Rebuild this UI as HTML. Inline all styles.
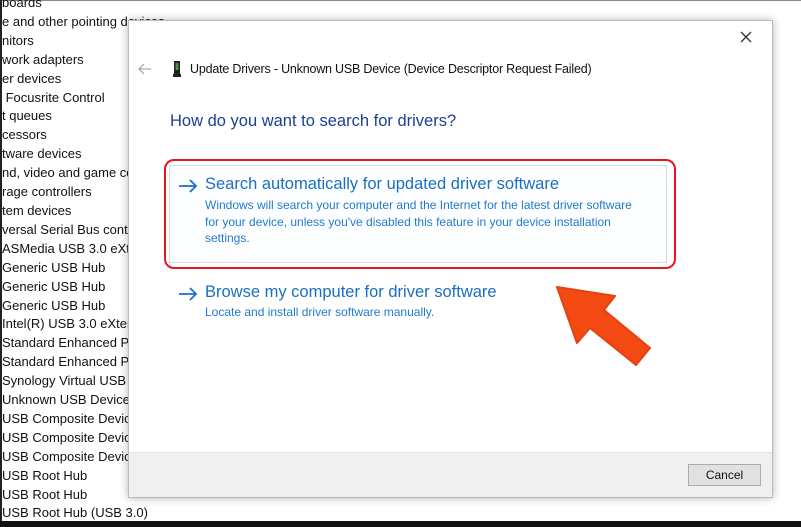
<!DOCTYPE html>
<html><head><meta charset="utf-8"><style>
*{margin:0;padding:0;box-sizing:border-box}
body{width:801px;height:527px;overflow:hidden;background:#fff;position:relative;font-family:"Liberation Sans",sans-serif}
.list{position:absolute;left:2px;top:-6px;font-size:13px;color:#111;line-height:18.9px;white-space:nowrap}
.lb{position:absolute;left:0;top:0;width:2px;height:527px;background:#222}
.bb{position:absolute;left:0;top:521px;width:801px;height:6px;background:#111}
.tb{position:absolute;left:0;top:0;width:801px;height:1px;background:#888}
.dlg{position:absolute;left:128px;top:20px;width:645px;height:478px;background:#fff;box-shadow:0 0 8px rgba(0,0,0,.3);border:1px solid #bbb}
.foot{position:absolute;left:0;bottom:0;width:100%;height:45px;background:#f0f0f0;border-top:1px solid #e4e4e4}
.cancel{position:absolute;left:559px;top:11px;width:73px;height:22px;border:1px solid #adadad;background:#e1e1e1;font-size:12px;text-align:center;line-height:20px;color:#111}
.abs{position:absolute;white-space:nowrap}
</style></head><body>
<div class="tb"></div>
<div class="list">
<div>boards</div><div>e and other pointing devices</div><div>nitors</div><div>work adapters</div><div>er devices</div><div>&nbsp;Focusrite Control</div><div>t queues</div><div>cessors</div><div>tware devices</div><div>nd, video and game controllers</div><div>rage controllers</div><div>tem devices</div><div>versal Serial Bus controllers</div>
<div>ASMedia USB 3.0 eXtensible</div><div>Generic USB Hub</div><div>Generic USB Hub</div><div>Generic USB Hub</div><div>Intel(R) USB 3.0 eXtensible</div><div>Standard Enhanced PCI</div><div>Standard Enhanced PCI</div><div>Synology Virtual USB Hub</div><div>Unknown USB Device (</div><div>USB Composite Device</div><div>USB Composite Device</div><div>USB Composite Device</div><div>USB Root Hub</div><div>USB Root Hub</div><div>USB Root Hub (USB 3.0)</div>
</div>
<div class="lb"></div>
<svg class="abs" style="left:151px;top:408px" width="14" height="22" viewBox="0 0 14 22"><path d="M1 1 L1 17 L5 13 L8 20 L10 19 L7 12 L12 12 Z" fill="#fff" stroke="#333" stroke-width="1"/></svg>
<div class="dlg">
 <svg class="abs" style="left:610px;top:9px" width="14" height="14" viewBox="0 0 14 14"><path d="M2 2L12 12M12 2L2 12" stroke="#333" stroke-width="1.3"/></svg>
 <svg class="abs" style="left:9px;top:42px" width="14" height="12" viewBox="0 0 14 12"><path d="M13 6H2M6 1L1 6L6 11" stroke="#aaa" stroke-width="1.3" fill="none"/></svg>
 <svg class="abs" style="left:44px;top:40px" width="8" height="16" viewBox="0 0 8 16"><rect x="1" y="0" width="6" height="13" fill="#222"/><rect x="2.5" y="2" width="3" height="7" fill="#3a9a3a"/><rect x="0" y="13" width="8" height="3" fill="#222"/></svg>
 <div class="abs" style="left:61px;top:41px;font-size:12.5px;color:#111;letter-spacing:-0.2px">Update Drivers - Unknown USB Device (Device Descriptor Request Failed)</div>
 <div class="abs" style="left:41px;top:91px;font-size:16.5px;color:#1c3f94">How do you want to search for drivers?</div>
 <div class="abs" style="left:35px;top:138px;width:512px;height:110px;border:2.5px solid #e8161c;border-radius:10px"></div>
 <div class="abs" style="left:40px;top:144px;width:498px;height:98px;border:1px solid #cfdbe6;background:#fdfeff"></div>
 <svg class="abs" style="left:49px;top:158px" width="20" height="14" viewBox="0 0 20 14"><path d="M1 7H18M12 1L18 7L12 13" stroke="#1a6fc4" stroke-width="1.8" fill="none"/></svg>
 <div class="abs" style="left:76px;top:154px;font-size:16.5px;color:#1a6fc4">Search automatically for updated driver software</div>
 <div class="abs" style="left:76px;top:176px;font-size:12px;color:#1f7ad0;line-height:16.5px">Windows will search your computer and the Internet for the latest driver software<br>for your device, unless you've disabled this feature in your device installation<br>settings.</div>
 <svg class="abs" style="left:49px;top:266px" width="20" height="14" viewBox="0 0 20 14"><path d="M1 7H18M12 1L18 7L12 13" stroke="#1a6fc4" stroke-width="1.8" fill="none"/></svg>
 <div class="abs" style="left:76px;top:262px;font-size:16.5px;color:#1a6fc4">Browse my computer for driver software</div>
 <div class="abs" style="left:76px;top:284px;font-size:12px;color:#1f7ad0">Locate and install driver software manually.</div>
 <div class="foot"><div class="cancel">Cancel</div></div>
</div>
<svg class="abs" style="left:0;top:0" width="801" height="527"><polygon points="557,287 615,296 604,310 650,348 636,365 590,328 577,343" fill="#f24a12" stroke="#e84010" stroke-width="2" stroke-linejoin="round"/></svg>
<div class="bb"></div>
</body></html>
